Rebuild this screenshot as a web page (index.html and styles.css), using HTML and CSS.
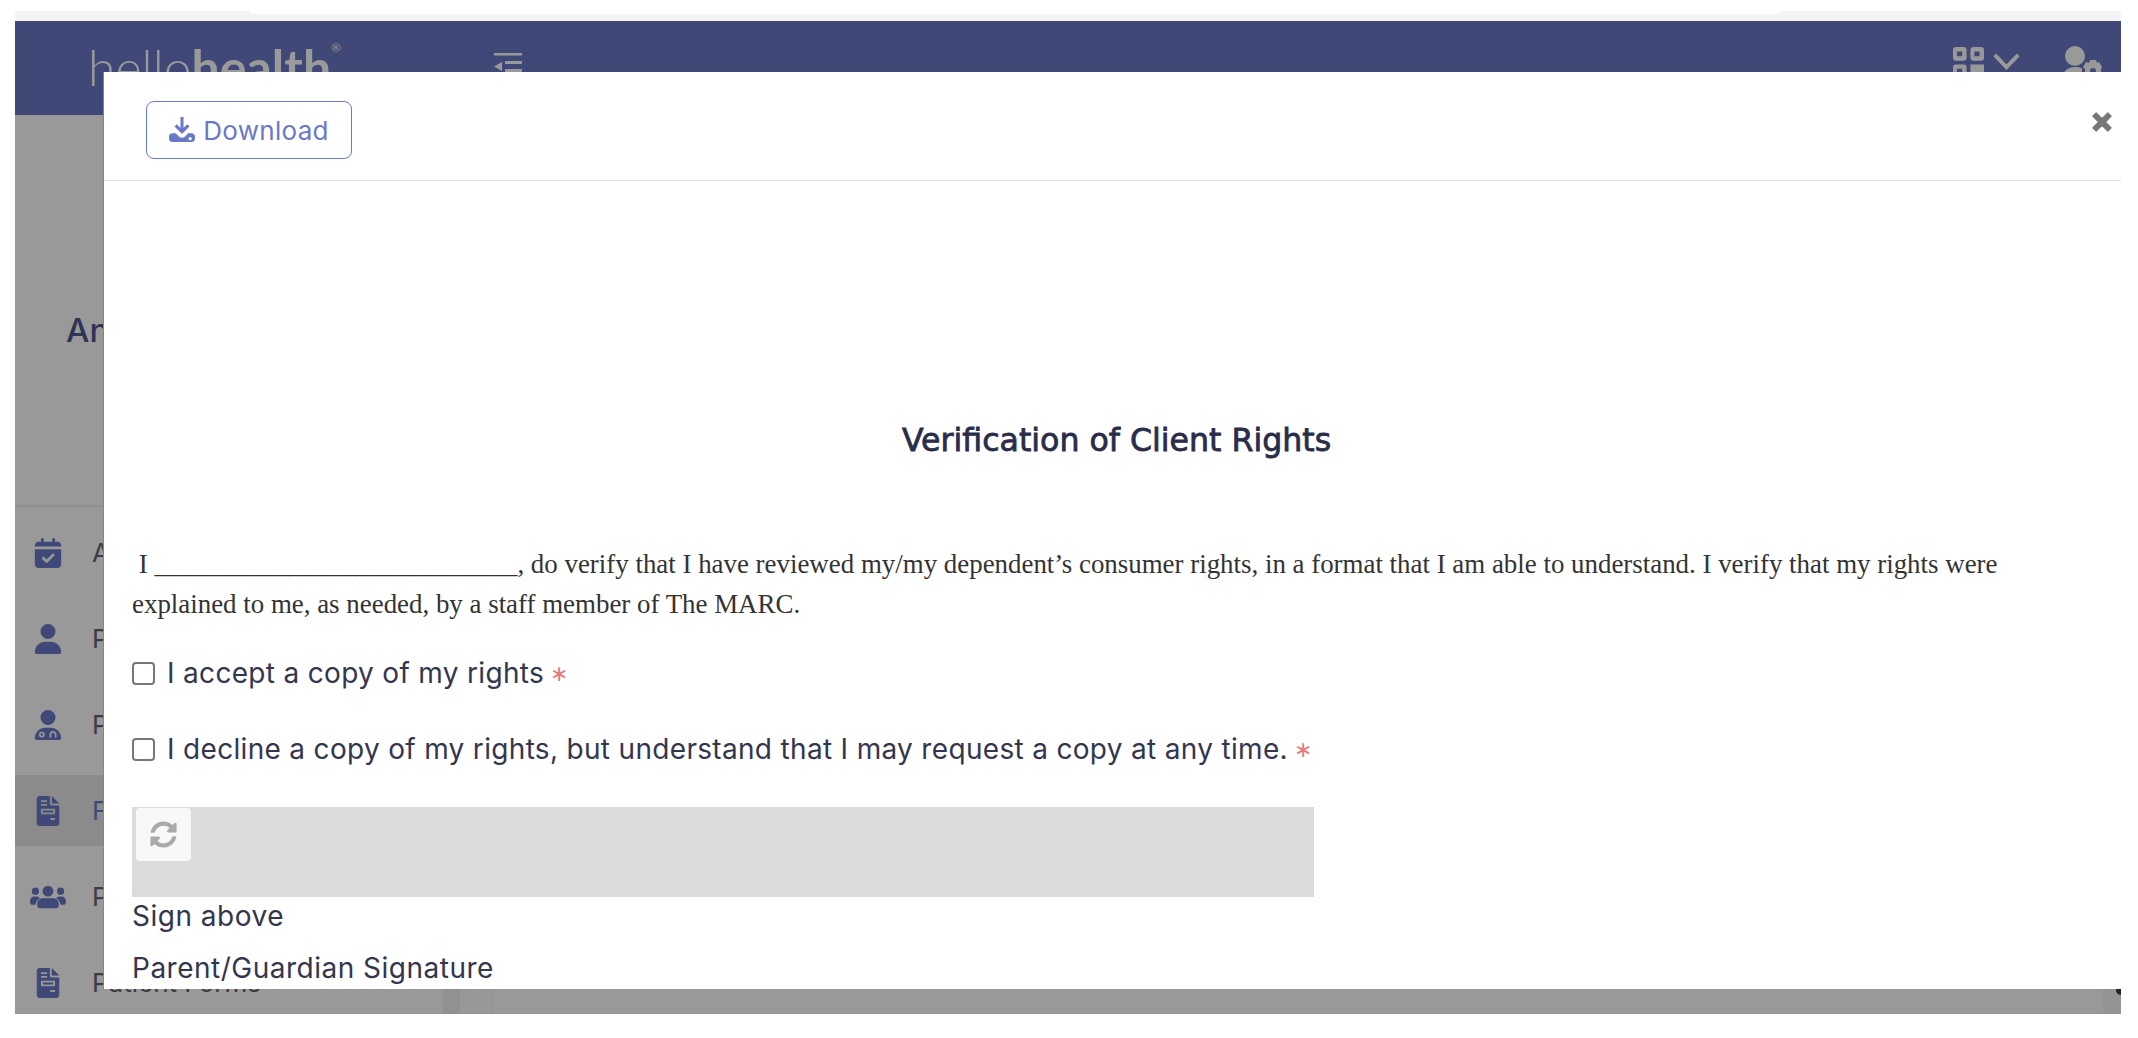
FILE: index.html
```html
<!DOCTYPE html>
<html lang="en">
<head>
    <meta charset="UTF-8">
    <title>Verification of Client Rights</title>
    <link rel="stylesheet" href="styles.css">
</head>
<body>
    <div class="topstrip"><div class="topstrip-tab"></div></div>
    <div class="app">
        <header class="topbar">
            <div class="logo"><span class="logo-thin">hello</span><span class="logo-bold">health</span><sup class="logo-r">®</sup></div>
            <svg class="collapse-icon" viewBox="0 0 28 24"><path d="M0 0h28v2.500H0zM11 8h17v3H11zM11 16h17v3H11zM0 13.500l8-4.500v9z"/></svg>
            <div class="topbar-right">
                <svg class="grid-icon" viewBox="0 0 32 36"><path fill-rule="evenodd" d="M3 0h8a3 3 0 0 1 3 3v8a3 3 0 0 1-3 3H3a3 3 0 0 1-3-3V3a3 3 0 0 1 3-3zm1 4.500v5h5.500v-5zM21 0h8a3 3 0 0 1 3 3v8a3 3 0 0 1-3 3h-8a3 3 0 0 1-3-3V3a3 3 0 0 1 3-3zm1 4.500v5h5.500v-5zM3 18h8a3 3 0 0 1 3 3v8a3 3 0 0 1-3 3H3a3 3 0 0 1-3-3v-8a3 3 0 0 1 3-3zm1 4.500v5h5.500v-5zM18 18h14v14H18z"/></svg>
                <svg class="chevron-icon" viewBox="0 0 28 18"><path d="M1.500 2L14 15 26.500 2" fill="none" stroke-width="4"/></svg>
                <svg class="user-gear-icon" viewBox="0 0 40 40"><circle cx="13" cy="10" r="10"/><path d="M0 34c0-8 5-13 13-13 3 0 5 .5 7 1v12z"/><path d="M28 14h6l1 3 2-1 3 5-1 2v4l1 2-3 5-2-1-1 3h-6l-1-3-3 1-3-5 2-2v-4l-2-2 3-5 3 1zm3 8a3 3 0 1 0 0 6 3 3 0 1 0 0-6z" fill-rule="evenodd"/></svg>
            </div>
        </header>
        <div class="backdrop-body">
            <aside class="sidebar">
                <div class="patient-name">An</div>
                <ul class="side-menu">
                    <li><svg class="side-icon" viewBox="0 0 448 512"><path fill-rule="evenodd" d="M128 0c13 0 24 11 24 24v40h144V24c0-13 11-24 24-24s24 11 24 24v40h40c35 0 64 29 64 64v16H0v-16c0-35 29-64 64-64h40V24c0-13 11-24 24-24zM0 192h448v256c0 35-29 64-64 64H64c-35 0-64-29-64-64zm329 113c9-9 9-25 0-34s-25-9-34 0l-95 95-39-39c-9-9-25-9-34 0s-9 25 0 34l56 56c9 9 25 9 34 0z"/></svg><span>Appointments</span></li>
                    <li><svg class="side-icon" viewBox="0 0 448 512"><path d="M224 256a128 128 0 1 0 0-256 128 128 0 1 0 0 256zM178 304C79 304 0 383 0 482c0 16 13 30 30 30h388c17 0 30-14 30-30 0-99-79-178-178-178z"/></svg><span>Patients</span></li>
                    <li><svg class="side-icon" viewBox="0 0 448 512"><path fill-rule="evenodd" d="M224 256a128 128 0 1 0 0-256 128 128 0 1 0 0 256zM178 304C79 304 0 383 0 482c0 16 13 30 30 30h388c17 0 30-14 30-30 0-99-79-178-178-178zM120 370a50 50 0 1 0 0 100 50 50 0 1 0 0-100zm0 28a22 22 0 1 1 0 44 22 22 0 1 1 0-44zM250 470v-50c0-35 28-60 60-60s60 25 60 60v50h-30v-50c0-18-14-30-30-30s-30 12-30 30v50z"/></svg><span>Providers</span></li>
                    <li class="active"><svg class="side-icon" viewBox="0 0 384 512"><path fill-rule="evenodd" d="M48 0h176v128c0 18 14 32 32 32h128v304c0 26-22 48-48 48H48c-26 0-48-22-48-48V48C0 22 22 0 48 0zM256 0l128 128H256zM72 72v32h104V72zm0 64v32h104v-32zm0 80v96h240v-96zm32 32h176v32H104zm128 128v32h80v-32z"/></svg><span>Forms</span></li>
                    <li><svg class="side-icon wide" viewBox="0 64 640 400"><path d="M96 224a64 64 0 1 0 0-128 64 64 0 1 0 0 128zm448 0a64 64 0 1 0 0-128 64 64 0 1 0 0 128zM320 256a96 96 0 1 0 0-192 96 96 0 1 0 0 192zM80 256C36 256 0 292 0 336v32c0 18 14 32 32 32h66c6-48 35-88 76-112-12-20-34-32-62-32zm480 0h-32c-28 0-50 12-62 32 41 24 70 64 76 112h66c18 0 32-14 32-32v-32c0-44-36-80-80-80zm-336 32c-60 0-96 50-96 112v16c0 26 22 48 48 48h288c26 0 48-22 48-48v-16c0-62-36-112-96-112z"/></svg><span>Patient Groups</span></li>
                    <li><svg class="side-icon" viewBox="0 0 384 512"><path fill-rule="evenodd" d="M48 0h176v128c0 18 14 32 32 32h128v304c0 26-22 48-48 48H48c-26 0-48-22-48-48V48C0 22 22 0 48 0zM256 0l128 128H256zM72 72v32h104V72zm0 64v32h104v-32zm0 80v96h240v-96zm32 32h176v32H104zm128 128v32h80v-32z"/></svg><span>Patient Forms</span></li>
                </ul>
            </aside>
            <div class="content-gutter"></div>
            <div class="content-panel"></div>
            <div class="page-scroll"></div>
        </div>

        <div class="modal">
            <div class="modal-header">
                <button class="btn-download">
                    <svg class="download-icon" viewBox="0 0 24 24"><path d="M10.600 0h2.800v10.200l3.500-3.500 2 2-6.900 6.900-6.900-6.900 2-2 3.500 3.500z"/><path fill-rule="evenodd" d="M3 15h3.200l3 3c1.600 1.500 4 1.500 5.600 0l3-3H21c1.700 0 3 1.300 3 3v2c0 1.700-1.300 3-3 3H3c-1.700 0-3-1.300-3-3v-2c0-1.700 1.300-3 3-3zm16.500 3.500a1.500 1.500 0 1 0 0 3 1.500 1.500 0 1 0 0-3z"/></svg>
                    Download
                </button>
                <svg class="close-icon" viewBox="0 0 24 24"><path d="M5 1l7 7 7-7 4 4-7 7 7 7-4 4-7-7-7 7-4-4 7-7-7-7z" stroke-width="1.500" stroke-linejoin="round"/></svg>
            </div>
            <div class="modal-body">
                <h2 class="form-title">Verification of Client Rights</h2>
                <p class="form-text">&nbsp;I ___________________________, do verify that I have reviewed my/my dependent’s consumer rights, in a format that I am able to understand. I verify that my rights were explained to me, as needed, by a staff member of The MARC.</p>
                <label class="check-row"><span class="checkbox"></span>I accept a copy of my rights<span class="required">∗</span></label>
                <label class="check-row second"><span class="checkbox"></span>I decline a copy of my rights, but understand that I may request a copy at any time.<span class="required">∗</span></label>
                <div class="signature-pad">
                    <div class="refresh-btn">
                        <svg viewBox="0 0 512 512"><path d="M370.720 133.280C339.458 104.008 298.888 87.962 255.848 88c-77.458.068-144.328 53.178-162.791 126.850-1.344 5.363-6.122 9.150-11.651 9.150H24.103c-7.498 0-13.194-6.807-11.807-14.176C33.933 94.924 134.813 8 256 8c66.448 0 126.791 26.136 171.315 68.685L463.030 40.970C478.149 25.851 504 36.559 504 57.941V192c0 13.255-10.745 24-24 24H345.941c-21.382 0-32.090-25.851-16.971-40.971l41.750-41.749zM32 296h134.059c21.382 0 32.090 25.851 16.971 40.971l-41.750 41.750c31.262 29.273 71.835 45.319 114.876 45.280 77.418-.07 144.315-53.144 162.787-126.849 1.344-5.363 6.122-9.150 11.651-9.150h57.304c7.498 0 13.194 6.807 11.807 14.176C478.067 417.076 377.187 504 256 504c-66.448 0-126.791-26.136-171.315-68.685L48.970 471.030C33.851 486.149 8 475.441 8 454.059V320c0-13.255 10.745-24 24-24z"/></svg>
                    </div>
                </div>
                <div class="sign-label">Sign above</div>
                <div class="sign-label guardian">Parent/Guardian Signature</div>
            </div>
        </div>
    </div>
</body>
</html>
```
FILE: styles.css
```css
* {
    box-sizing: border-box;
}

html, body {
    margin: 0;
    height: 100%;
    background: #fff;
    overflow: hidden;
}

body {
    padding: 11px 17px 0 15px;
    font-family: "Inter", "Noto Sans", sans-serif;
    color: #2f3048;
}

.topstrip {
    height: 10px;
    padding: 0 341px 0 235px;
    background: #f4f4f7;
}

.topstrip-tab {
    height: 3px;
    background: #fff;
    border-radius: 0 0 8px 8px;
}

.app {
    position: relative;
    height: 993px;
    background: #999;
    display: flex;
    flex-direction: column;
    overflow: hidden;
}

.topbar {
    height: 94px;
    flex: none;
    background: #404878;
    display: flex;
    padding: 26px 19px 0 73px;
}

.logo {
    width: 406px;
    flex: none;
    margin-top: -5px;
    font-family: "Lato", sans-serif;
    font-size: 50px;
    line-height: 50px;
    color: #9a9a9a;
}

.logo-thin {
    font-weight: 300;
}

.logo-bold {
    font-weight: 700;
}

.logo-r {
    font-size: 12px;
    line-height: 12px;
    vertical-align: top;
}

.collapse-icon {
    width: 28px;
    height: 24px;
    margin-top: 6px;
    fill: #999;
}

.topbar-right {
    margin-left: auto;
    display: flex;
    align-items: flex-start;
    gap: 9px;
}

.grid-icon {
    width: 31px;
    height: 35px;
    fill: #999;
}

.chevron-icon {
    width: 27px;
    height: 17px;
    margin-top: 6px;
    stroke: #999;
}

.user-gear-icon {
    width: 40px;
    height: 40px;
    margin: -1px 0 0 33px;
    fill: #999;
}

.backdrop-body {
    flex: 1;
    display: flex;
    min-height: 0;
}

.sidebar {
    width: 428px;
    flex: none;
}

.patient-name {
    height: 392px;
    padding: 195px 0 0 51px;
    font-size: 33px;
    line-height: 40px;
    font-weight: 500;
    color: #2f3355;
    border-bottom: 2px solid #909090;
}

.side-menu {
    list-style: none;
    margin: 10px 0 0;
    padding: 0;
}

.side-menu li {
    height: 71px;
    margin-bottom: 15.100px;
    display: flex;
    align-items: center;
    gap: 26px;
    padding-left: 15px;
    font-size: 26px;
    color: #3c3c44;
}

.side-menu li.active {
    background: #8b8b8b;
    color: #404878;
}

.side-icon {
    width: 36px;
    height: 30px;
    fill: #404878;
}

.content-gutter {
    width: 17px;
    flex: none;
    background: #909193;
}

.content-panel {
    flex: 1;
    background: linear-gradient(to right, #989898 32px, #939394 32px, #939394 33px, #999 33px);
}

.page-scroll {
    position: relative;
    width: 18px;
    flex: none;
    background: #949494;
}

.page-scroll::after {
    content: "";
    position: absolute;
    right: 0;
    bottom: 19px;
    width: 5px;
    height: 7px;
    background: #222;
    border-radius: 0 0 0 5px;
}

.modal {
    position: absolute;
    left: 89px;
    top: 51px;
    width: 2017px;
    height: 917px;
    background: #fff;
    box-shadow: -1px 0 0 #858585;
    overflow: hidden;
}

.modal-header {
    height: 109px;
    border-bottom: 1px solid #e2e2e2;
    padding: 29px 0 0 42px;
    display: flex;
    justify-content: space-between;
    align-items: flex-start;
}

.btn-download {
    width: 206px;
    height: 58px;
    display: flex;
    align-items: center;
    justify-content: center;
    gap: 8px;
    background: #fff;
    border: 1.500px solid #6a78c8;
    border-radius: 8px;
    font-family: inherit;
    font-size: 26px;
    letter-spacing: .3px;
    color: #6a78c8;
}

.download-icon {
    width: 26px;
    height: 26px;
    fill: #6a78c8;
}

.close-icon {
    width: 20px;
    height: 20px;
    margin: 11px 9px 0 0;
    fill: #777;
    stroke: #777;
}

.modal-body {
    padding: 0 20px 0 28px;
}

.form-title {
    margin: 0;
    padding-top: 239px;
    text-align: center;
    font-family: "DejaVu Sans", sans-serif;
    font-size: 31.600px;
    line-height: 40px;
    font-weight: 400;
    -webkit-text-stroke: .8px #2a2d4a;
    color: #2a2d4a;
}

.form-text {
    margin: 84px 0 0;
    font-family: "Liberation Serif", serif;
    font-size: 26.900px;
    line-height: 40px;
    color: #333;
}

.check-row {
    display: flex;
    align-items: center;
    height: 40px;
    margin-top: 29px;
    font-size: 28px;
    letter-spacing: .32px;
    color: #34364e;
}

.check-row.second {
    margin-top: 36px;
}

.checkbox {
    width: 23px;
    height: 23px;
    margin-right: 12px;
    border: 2px solid #777;
    border-radius: 4px;
    background: #fff;
}

.required {
    margin-left: 6px;
    font-family: "DejaVu Sans", sans-serif;
    font-size: 22px;
    color: #e37a7a;
}

.signature-pad {
    width: 1182px;
    height: 90px;
    margin-top: 38px;
    padding: 1px 0 0 4px;
    background: #dbdbdb;
}

.refresh-btn {
    width: 55px;
    height: 53px;
    display: flex;
    align-items: center;
    justify-content: center;
    background: #f7f8f9;
    border-radius: 4px;
}

.refresh-btn svg {
    width: 27px;
    height: 27px;
    fill: #aaa;
}

.sign-label {
    margin-top: 1px;
    font-size: 28px;
    line-height: 36px;
    letter-spacing: .5px;
    color: #34364e;
}

.sign-label.guardian {
    margin-top: 16px;
}
```
